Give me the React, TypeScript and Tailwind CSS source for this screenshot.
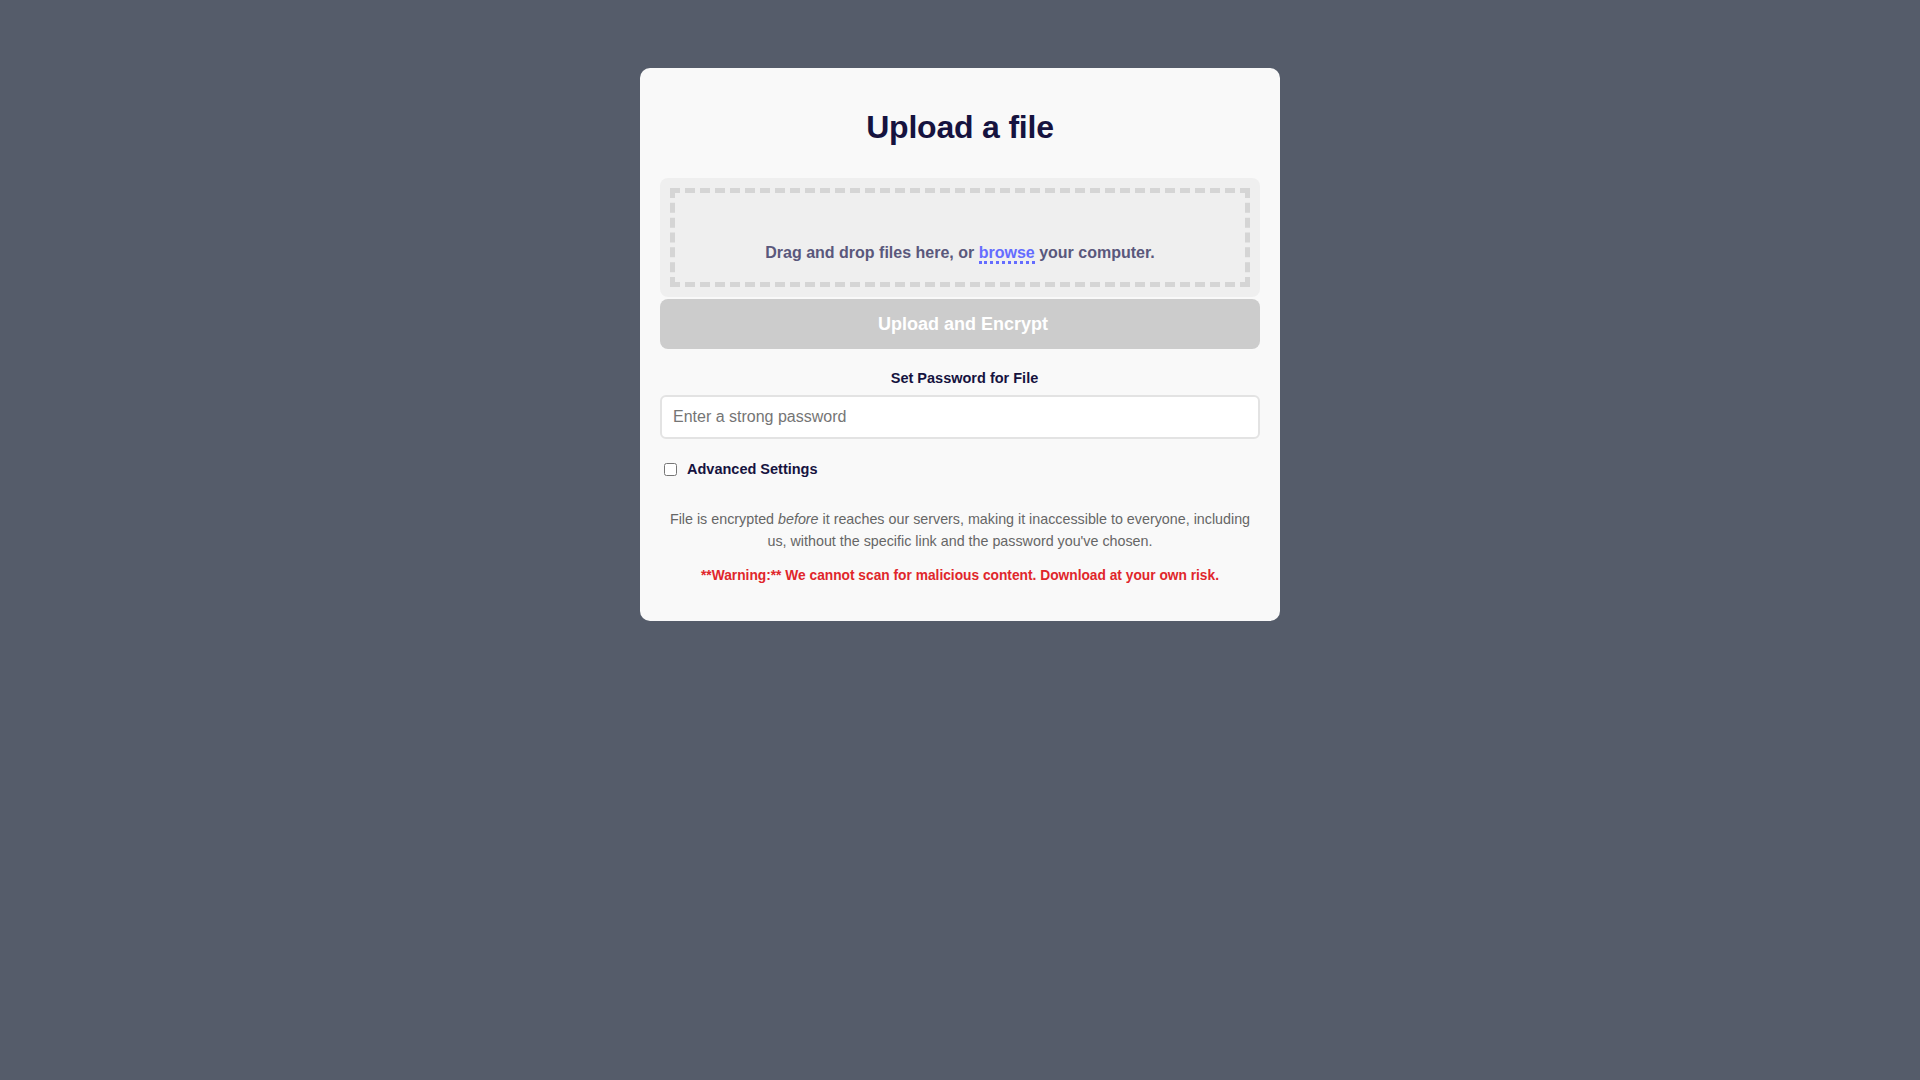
export default function App() {
  return (
    <div
      className="min-h-screen w-full bg-[#555c6a] flex justify-center pt-[68px]"
      style={{ fontFamily: '"Liberation Sans", Arial, sans-serif' }}
    >
      <div className="w-[640px] self-start bg-[#f9f9f9] rounded-[10px] px-5 pt-[41px] pb-[37px]">
        <h1 className="text-center text-[32px] leading-[37px] font-bold text-[#16133f] tracking-[-0.2px]">
          Upload a file
        </h1>

        {/* drop zone */}
        <div className="mt-[32px] bg-[#efefef] rounded-[8px] p-[10px]">
          <div className="border-[5px] border-dashed border-[#d5d5d5] pt-[50px] pb-[19px] text-center">
            <p className="text-[16px] leading-[20px] font-bold text-[#5a587c]">
              Drag and drop files here, or{" "}
              <span className="text-[#646cff] border-b-[3px] border-dotted border-[#646cff]">
                browse
              </span>{" "}
              your computer.
            </p>
          </div>
        </div>

        <button className="mt-[2px] w-full h-[50px] rounded-[8px] bg-[#cccccc] text-white text-[18px] font-bold pl-[6px]">
          Upload and Encrypt
        </button>

        <div className="mt-[21px] text-center text-[14.5px] leading-[17px] font-bold text-[#16133f] pl-[9px]">
          Set Password for File
        </div>
        <input
          type="password"
          placeholder="Enter a strong password"
          className="mt-[8px] w-full h-[44px] bg-white border-2 border-[#e3e3e3] rounded-[6px] px-[11px] text-[16px] text-[#333] placeholder:text-[#757575] outline-none"
        />

        <label className="mt-[22px] flex items-center h-[17px]">
          <input type="checkbox" className="ml-[4px] w-[13px] h-[13px]" />
          <span className="ml-[10px] text-[14.5px] font-bold text-[#16133f]">
            Advanced Settings
          </span>
        </label>

        <p className="mt-[31px] text-center text-[14.3px] leading-[21.5px] text-[#666666] px-2">
          File is encrypted <em>before</em> it reaches our servers, making it
          inaccessible to everyone, including us, without the specific link and
          the password you've chosen.
        </p>

        <p className="mt-[15px] text-center text-[13.75px] leading-[17px] font-bold text-[#e0262b]">
          **Warning:** We cannot scan for malicious content. Download at your own
          risk.
        </p>
      </div>
    </div>
  );
}
